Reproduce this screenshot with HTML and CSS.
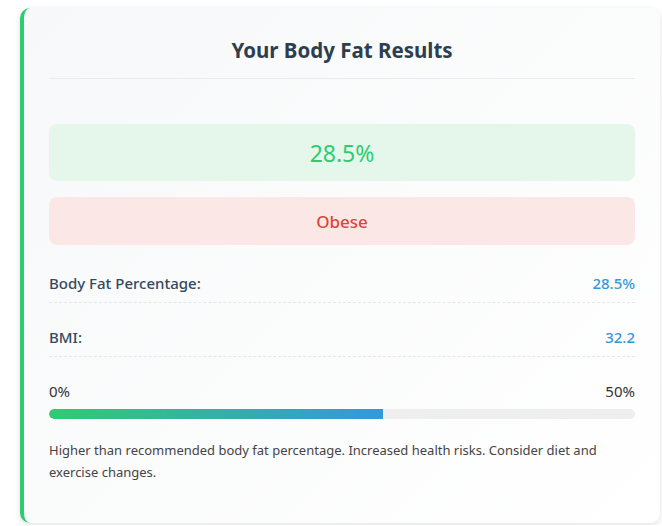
FILE: index.html
```html
<!DOCTYPE html>
<html>
<head>
<meta charset="utf-8">
<link rel="stylesheet" href="styles.css">
</head>
<body>
<div class="card">
  <h2 class="title">Your Body Fat Results</h2>
  <div class="results">
    <div class="big-value">28.5%</div>
    <div class="category">Obese</div>
    <div class="rows">
      <div class="row"><span class="label">Body Fat Percentage:</span><span class="value">28.5%</span></div>
      <div class="row"><span class="label">BMI:</span><span class="value">32.2</span></div>
    </div>
    <div class="scale"><span>0%</span><span>50%</span></div>
    <div class="bar"><div class="fill" style="width:57%"></div></div>
    <p class="desc">Higher than recommended body fat percentage. Increased health risks. Consider diet and exercise changes.</p>
  </div>
</div>
</body>
</html>
```
FILE: styles.css
```css
html, body { margin: 0; padding: 0; background: #fff; }
body { padding: 8px 2px 2px 20px; font-family: "Noto Sans", "Open Sans", sans-serif; }
.card {
  width: 640px;
  height: 515px;
  box-sizing: border-box;
  border-left: 4px solid #2ecc71;
  border-radius: 10px;
  background: linear-gradient(135deg, #f7f8f9 0%, #ffffff 100%);
  box-shadow: 0 2px 6px rgba(0,0,0,0.12);
  padding: 20px 25px 25px 25px;
}
.title {
  margin: 0;
  text-align: center;
  font-size: 20.5px;
  font-weight: 700;
  color: #2c3e50;
  padding: 8px 0 14px;
  border-bottom: 1px solid #e9ecef;
}
.results { padding-top: 45px; }
.big-value {
  height: 57px;
  border-radius: 8px;
  background: #e5f7eb;
  color: #2ecc71;
  font-size: 23px;
  display: flex; align-items: center; justify-content: center;
}
.category {
  margin-top: 16px;
  height: 48px;
  border-radius: 8px;
  background: #fbe8e6;
  color: #d9473a;
  font-size: 17px;
  font-weight: 500;
  display: flex; align-items: center; justify-content: center;
}
.rows { margin-top: 4px; }
.row {
  display: flex; justify-content: space-between; align-items: center;
  border-bottom: 1px dashed #e6e6e6;
  font-size: 15px;
  line-height: 20px;
  padding: 24px 0 9px;
}
.label { color: #34495e; font-weight: 500; }
.value { color: #3498db; font-weight: 500; }
.scale {
  display: flex; justify-content: space-between;
  font-size: 15px; line-height: 20px; color: #333;
  margin-top: 24px;
}
.bar {
  margin-top: 8px;
  height: 10px;
  border-radius: 5px;
  background: #eeeeee;
  overflow: hidden;
}
.fill {
  height: 100%;
  border-radius: 5px 0 0 5px;
  background: linear-gradient(90deg, #2ecc71, #3498db);
}
.desc {
  margin: 20px 0 0;
  font-size: 13px;
  line-height: 22px;
  color: #444;
}
```
